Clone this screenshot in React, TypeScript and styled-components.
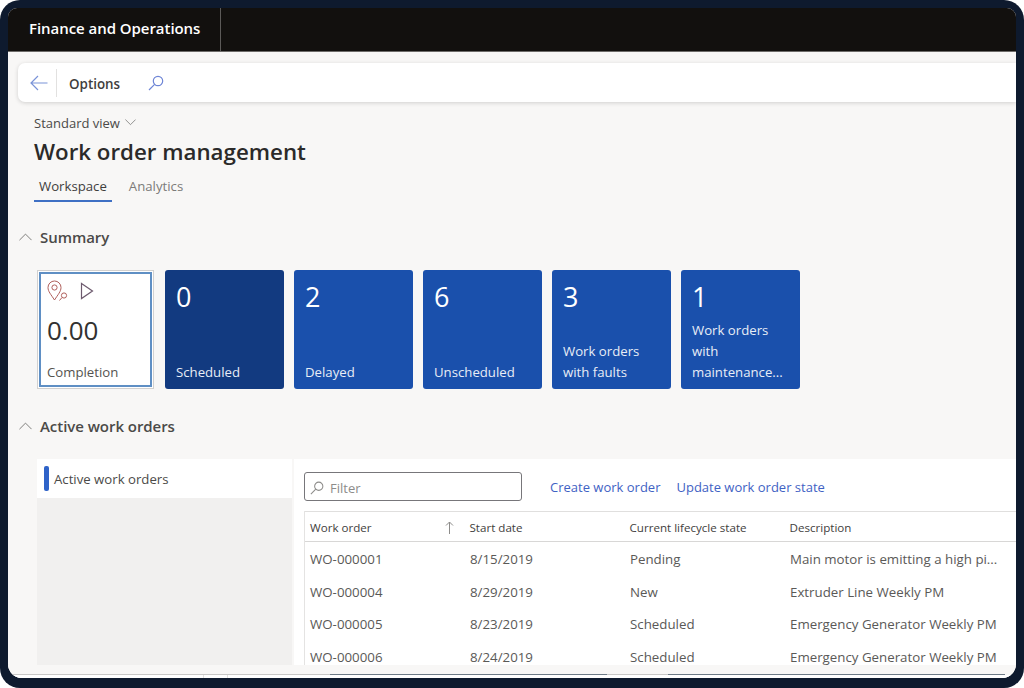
import React from 'react';
import styled, { createGlobalStyle } from 'styled-components';

const GlobalStyle = createGlobalStyle`
  html, body {
    margin: 0;
    padding: 0;
    background: #fff;
  }
  * {
    box-sizing: border-box;
  }
`;

const Frame = styled.div`
  width: 1024px;
  height: 688px;
  padding: 8px 8px 10px;
  background: #0e1a2e;
  border-radius: 20px;
  overflow: hidden;
  font-family: 'Open Sans', 'Noto Sans', sans-serif;
`;

const Window = styled.div`
  display: flex;
  flex-direction: column;
  height: 670px;
  border-radius: 9px 9px 14px 14px;
  background: #f8f7f6;
  overflow: hidden;
`;

const Header = styled.header`
  flex: none;
  height: 44px;
  background: #12100e;
  border-bottom: 1px solid #6e6c6a;
  display: flex;
`;

const Brand = styled.div`
  width: 213px;
  padding-left: 21px;
  border-right: 1px solid #5c5a58;
  color: #fff;
  font-size: 15px;
  font-weight: 600;
  letter-spacing: -0.05px;
  line-height: 40px;
`;

const Toolbar = styled.div`
  flex: none;
  height: 39px;
  margin: 11px 0 0 10px;
  display: flex;
  align-items: center;
  background: #fff;
  border-radius: 7px 0 0 7px;
  box-shadow: 0 1px 4px rgba(0, 0, 0, 0.16);
  color: #7a93d8;
`;

const BackButton = styled.div`
  width: 39px;
  height: 28px;
  padding-left: 4px;
  display: flex;
  align-items: center;
  justify-content: center;
  border-right: 1px solid #e2e1e0;
`;

const ToolLabel = styled.span`
  margin: 2px 28px 0 12px;
  font-size: 13.4px;
  font-weight: 600;
  color: #3f3e3d;
`;

const Main = styled.main`
  flex: 1;
  min-height: 0;
  overflow: hidden;
`;

const TitleBlock = styled.div`
  padding: 11px 0 0 26px;
`;

const ViewPicker = styled.div`
  display: flex;
  align-items: center;
  gap: 5px;
  height: 19px;
  color: #4b4a48;
  font-size: 13px;
`;

const PageTitle = styled.h1`
  margin: 3px 0 0;
  height: 33px;
  font-size: 22.3px;
  font-weight: 600;
  line-height: 33px;
  color: #2b2a29;
`;

const Tabs = styled.div`
  display: flex;
  gap: 12px;
  margin-top: 6px;
`;

const Tab = styled.div<{ $active?: boolean }>`
  padding: 0 5px;
  height: 28px;
  line-height: 24px;
  font-size: 13.2px;
  color: ${(p) => (p.$active ? '#3f3e3d' : '#7c7b79')};
  border-bottom: 2px solid ${(p) => (p.$active ? '#3f70c4' : 'transparent')};
`;

const SectionHead = styled.div<{ $top: number }>`
  display: flex;
  align-items: center;
  height: 20px;
  margin-top: ${(p) => p.$top}px;
  padding-left: 11px;
  gap: 8px;
  color: #8d8c8a;
`;

const SectionTitle = styled.h2`
  margin: 0;
  font-size: 15px;
  font-weight: 600;
  letter-spacing: -0.05px;
  color: #4b4a48;
`;

const Tiles = styled.div`
  display: flex;
  gap: 10px;
  margin: 23px 0 0 29px;
`;

const KpiTile = styled.div`
  width: 117px;
  height: 119px;
  margin-right: 1px;
  background: #fff;
  border: 1px solid #d2d1d0;
  box-shadow: inset 0 0 0 1px #fff, inset 0 0 0 3px #5f8fc4;
  display: flex;
  flex-direction: column;
  color: #323130;
`;

const KpiIcons = styled.div`
  display: flex;
  gap: 12px;
  padding: 7px 0 0 9px;
  height: 33px;
  align-items: center;
`;

const KpiValue = styled.div`
  padding-left: 9px;
  margin-top: 8px;
  font-size: 26px;
  line-height: 36px;
`;

const TileLabel = styled.div`
  margin-top: auto;
  font-size: 13.2px;
  line-height: 21px;
`;

const KpiLabel = styled(TileLabel)`
  padding: 0 0 5px 9px;
  color: #55534f;
`;

const Tile = styled.div<{ $dark?: boolean }>`
  width: 119px;
  height: 119px;
  padding: 9px 10px 6px 11px;
  border-radius: 3px;
  display: flex;
  flex-direction: column;
  background: ${(p) => (p.$dark ? '#123a80' : '#1a50ac')};
  color: #e8edf6;
`;

const TileCount = styled.div`
  font-size: 27px;
  line-height: 36px;
  color: #fff;
`;

const Panel = styled.div`
  display: flex;
  margin: 23px 0 0 29px;
  height: 206px;
`;

const SideList = styled.div`
  flex: none;
  width: 255px;
  background: #f1f0ef;
`;

const SideItem = styled.div`
  height: 39px;
  display: flex;
  align-items: center;
  gap: 5px;
  padding-left: 7px;
  background: #fff;
  font-size: 13.2px;
  color: #4b4a48;
`;

const SideMarker = styled.span`
  width: 5px;
  height: 25px;
  border-radius: 2px;
  background: #2f63c8;
`;

const GridPane = styled.div`
  flex: 1;
  margin-left: 2px;
  padding: 13px 0 0 10px;
  background: #fff;
  overflow: hidden;
`;

const ActionRow = styled.div`
  display: flex;
  align-items: center;
  height: 29px;
`;

const FilterBox = styled.div`
  width: 218px;
  height: 29px;
  display: flex;
  align-items: center;
  gap: 6px;
  padding: 2px 0 0 5px;
  border: 1px solid #77767a;
  border-radius: 3px;
  color: #8d8c8a;
  font-size: 13px;
`;

const ActionLink = styled.a`
  margin-left: 28px;
  font-size: 13px;
  color: #3f62c4;

  & + & {
    margin-left: 16px;
  }
`;

const Table = styled.div`
  margin-top: 10px;
  border-left: 1px solid #e4e3e2;
`;

const GridRow = styled.div`
  display: grid;
  grid-template-columns: 160px 160px 160px 1fr;
  align-items: center;
  height: 32.6px;
  padding-left: 5px;
  font-size: 13.3px;
  color: #5a5957;
`;

const HeadRow = styled(GridRow)`
  grid-template-columns: 159.5px 160px 160px 1fr;
  height: 31px;
  padding-top: 1px;
  border-top: 1px solid #e0dfde;
  border-bottom: 1px solid #d8d7d6;
  font-size: 11.6px;
  font-weight: 500;
  color: #3f3e3d;
`;

const FirstRow = styled(GridRow)`
  margin-top: 1px;
`;

const SortCell = styled.div`
  display: flex;
  align-items: center;
  justify-content: space-between;
  padding-right: 16px;
  color: #8d8c8a;
`;

const SortLabel = styled.span`
  color: #3f3e3d;
`;

const BottomBar = styled.div`
  flex: none;
  height: 13px;
  padding-top: 9px;
  background: #f8f7f6;
`;

const RuleLine = styled.div`
  display: flex;
  height: 1px;
  padding-right: 11px;
`;

const RuleSegment = styled.div<{ $w?: number; $color: string }>`
  flex: ${(p) => (p.$w ? `0 0 ${p.$w}px` : '1')};
  background: ${(p) => p.$color};
`;

const TickRow = styled.div`
  display: flex;
  height: 3px;
  background: #fff;
`;

const TickCell = styled.div<{ $w: number }>`
  width: ${(p) => p.$w}px;
  border-right: 1px solid #e2e1e0;
`;

const SearchIcon = ({ size, color }: { size: number; color: string }) => (
  <svg width={size} height={size} viewBox="0 0 16 16" fill="none" stroke={color} strokeWidth="1.2">
    <circle cx="10" cy="6" r="4.7" />
    <path d="M6.6 9.4 L1 15" />
  </svg>
);

const BackArrow = () => (
  <svg width="18" height="16" viewBox="0 0 18 16" fill="none" stroke="currentColor" strokeWidth="1.2">
    <path d="M1 8 H17.5 M8 1 L1 8 L8 15" />
  </svg>
);

const Chevron = ({ up, width }: { up?: boolean; width: number }) => (
  <svg width={width} height={width * 0.6} viewBox="0 0 14 8" fill="none" stroke="#777674" strokeWidth="1">
    <path d={up ? 'M0.5 7.5 L7 1 L13.5 7.5' : 'M0.5 0.5 L7 7 L13.5 0.5'} />
  </svg>
);

const SortArrow = () => (
  <svg width="9" height="13" viewBox="0 0 9 13" fill="none" stroke="#8d8c8a" strokeWidth="1">
    <path d="M4.5 13 V1 M1 4.5 L4.5 1 L8 4.5" />
  </svg>
);

const PinIcon = () => (
  <svg width="21" height="23" viewBox="0 0 21 23" fill="none" stroke="#b0605c" strokeWidth="1">
    <path d="M7.5 20 C4 14.5 1 11.5 1 7.5 a6.5 6.5 0 0 1 13 0 C14 11.5 11 14.5 7.5 20 Z" />
    <circle cx="7.5" cy="7.5" r="2.6" />
    <circle cx="17" cy="15.5" r="2.6" />
    <path d="M15 17.5 L12.5 20.5" />
  </svg>
);

const PlayIcon = () => (
  <svg width="14" height="18" viewBox="0 0 14 18" fill="none" stroke="#6d5a6e" strokeWidth="1.2">
    <path d="M1.5 1.5 L12.5 9 L1.5 16.5 Z" />
  </svg>
);

const rows = [
  ['WO-000001', '8/15/2019', 'Pending', 'Main motor is emitting a high pi...'],
  ['WO-000004', '8/29/2019', 'New', 'Extruder Line Weekly PM'],
  ['WO-000005', '8/23/2019', 'Scheduled', 'Emergency Generator Weekly PM'],
  ['WO-000006', '8/24/2019', 'Scheduled', 'Emergency Generator Weekly PM'],
];

const tiles = [
  { count: '0', label: 'Scheduled', dark: true },
  { count: '2', label: 'Delayed' },
  { count: '6', label: 'Unscheduled' },
  { count: '3', label: 'Work orders with faults' },
  { count: '1', label: 'Work orders with maintenance...' },
];

export default function App() {
  return (
    <Frame>
      <GlobalStyle />
      <Window>
        <Header>
          <Brand>Finance and Operations</Brand>
        </Header>
        <Toolbar>
          <BackButton>
            <BackArrow />
          </BackButton>
          <ToolLabel>Options</ToolLabel>
          <SearchIcon size={16} color="#6f86d6" />
        </Toolbar>
        <Main>
          <TitleBlock>
            <ViewPicker>
              Standard view <Chevron width={11} />
            </ViewPicker>
            <PageTitle>Work order management</PageTitle>
            <Tabs>
              <Tab $active>Workspace</Tab>
              <Tab>Analytics</Tab>
            </Tabs>
          </TitleBlock>
          <SectionHead $top={25}>
            <Chevron up width={13} />
            <SectionTitle>Summary</SectionTitle>
          </SectionHead>
          <Tiles>
            <KpiTile>
              <KpiIcons>
                <PinIcon />
                <PlayIcon />
              </KpiIcons>
              <KpiValue>0.00</KpiValue>
              <KpiLabel>Completion</KpiLabel>
            </KpiTile>
            {tiles.map((t) => (
              <Tile key={t.label + t.count} $dark={t.dark}>
                <TileCount>{t.count}</TileCount>
                <TileLabel>{t.label}</TileLabel>
              </Tile>
            ))}
          </Tiles>
          <SectionHead $top={27}>
            <Chevron up width={13} />
            <SectionTitle>Active work orders</SectionTitle>
          </SectionHead>
          <Panel>
            <SideList>
              <SideItem>
                <SideMarker />
                Active work orders
              </SideItem>
            </SideList>
            <GridPane>
              <ActionRow>
                <FilterBox>
                  <SearchIcon size={14} color="#8d8c8a" />
                  Filter
                </FilterBox>
                <ActionLink>Create work order</ActionLink>
                <ActionLink>Update work order state</ActionLink>
              </ActionRow>
              <Table>
                <HeadRow>
                  <SortCell>
                    <SortLabel>Work order</SortLabel>
                    <SortArrow />
                  </SortCell>
                  <span>Start date</span>
                  <span>Current lifecycle state</span>
                  <span>Description</span>
                </HeadRow>
                {rows.map((r, i) => {
                  const Row = i === 0 ? FirstRow : GridRow;
                  return (
                    <Row key={r[0]}>
                      {r.map((c) => (
                        <span key={c}>{c}</span>
                      ))}
                    </Row>
                  );
                })}
              </Table>
            </GridPane>
          </Panel>
        </Main>
        <BottomBar>
          <RuleLine>
            <RuleSegment $w={322} $color="#c8c7c6" />
            <RuleSegment $w={277} $color="#6d7a86" />
            <RuleSegment $w={61} $color="#c8c7c6" />
            <RuleSegment $color="#6d7a86" />
          </RuleLine>
          <TickRow>
            <TickCell $w={196} />
            <TickCell $w={24} />
          </TickRow>
        </BottomBar>
      </Window>
    </Frame>
  );
}
